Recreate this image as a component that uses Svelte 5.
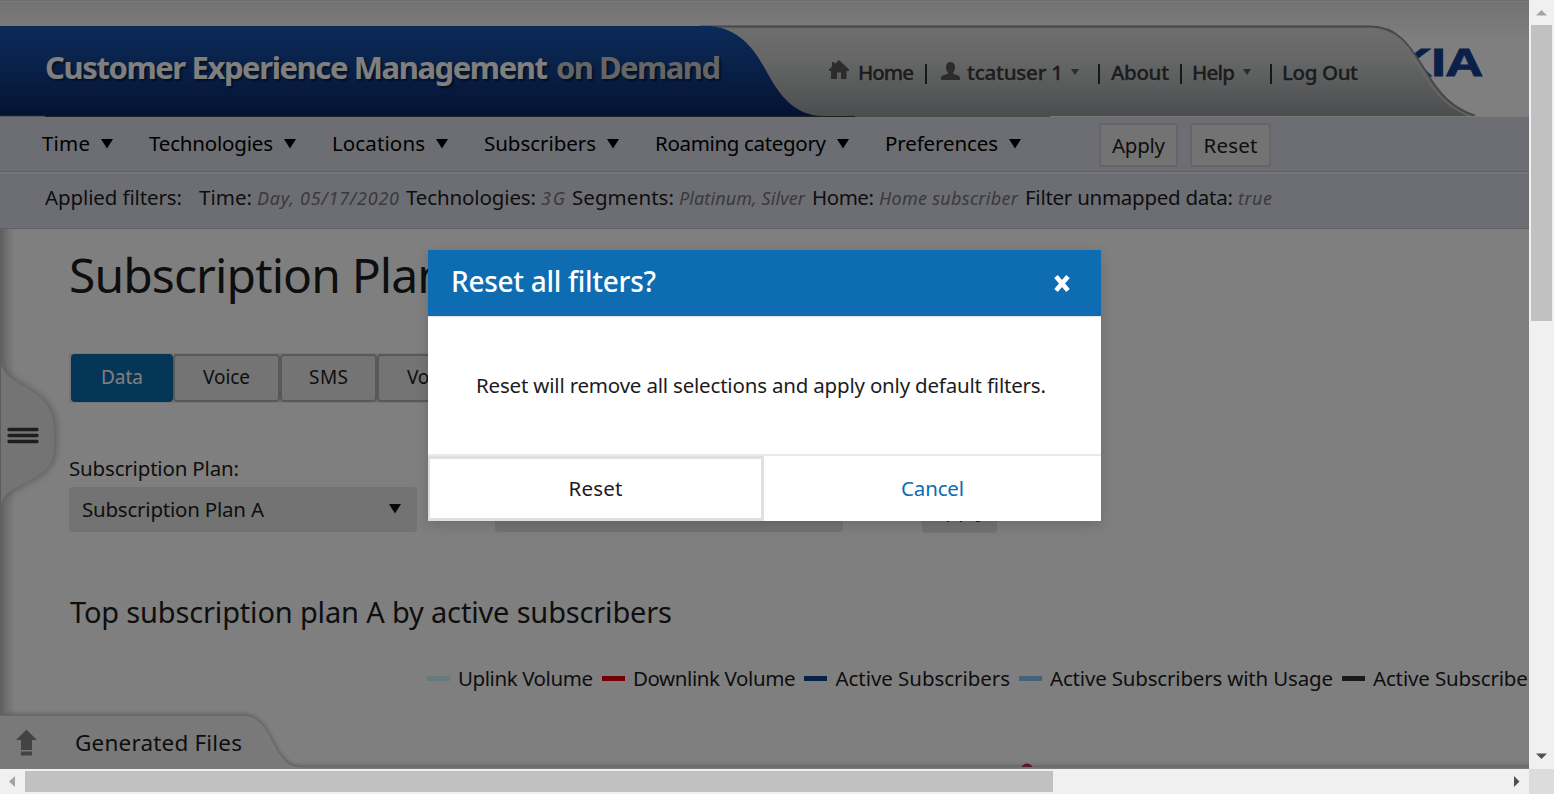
<script>
  const menu = [
    { label: 'Time', w: 48 },
    { label: 'Technologies', w: 124 },
    { label: 'Locations', w: 93 },
    { label: 'Subscribers', w: 112 },
    { label: 'Roaming category', w: 171 },
    { label: 'Preferences', w: 113 }
  ];
  const filters = [
    { name: 'Time:', w: 53, value: 'Day, 05/17/2020', vw: 142 },
    { name: 'Technologies:', w: 130, value: '3G', vw: 24 },
    { name: 'Segments:', w: 102, value: 'Platinum, Silver', vw: 126 },
    { name: 'Home:', w: 62, value: 'Home subscriber', vw: 139 },
    { name: 'Filter unmapped data:', w: 208, value: 'true', vw: 34 }
  ];
  const tabs = [
    { label: 'Data', w: 42, box: 102, active: true },
    { label: 'Voice', w: 47, box: 107 },
    { label: 'SMS', w: 39, box: 97 },
    { label: 'VoLTE', w: 52, box: 112 }
  ];
  const legend = [
    { label: 'Uplink Volume', w: 135, color: '#cdf2fb' },
    { label: 'Downlink Volume', w: 162.5, color: '#e60009' },
    { label: 'Active Subscribers', w: 174.5, color: '#124191' },
    { label: 'Active Subscribers with Usage', w: 283, color: '#87c6f3' },
    { label: 'Active Subscribers without Usage', w: 316, color: '#333333' }
  ];

  // Tracks a label out or in so that it takes exactly the given advance width.
  function fit(node, width) {
    const range = document.createRange();
    range.selectNodeContents(node);
    const natural = range.getBoundingClientRect().width;
    const step = (width - natural) / (node.textContent.length - 1);
    node.style.letterSpacing = `${step}px`;
    node.style.marginRight = `${-step}px`;
  }
</script>

<div class="window">
  <div class="page">
    <header>
      <svg class="banner" width="1529" height="117" viewBox="0 0 1529 117">
        <defs>
          <linearGradient id="top" x1="0" y1="0" x2="0" y2="1">
            <stop offset="0" stop-color="#e6e6ea" /><stop offset=".22" stop-color="#f4f4f4" /><stop offset=".35" stop-color="#fff" />
          </linearGradient>
          <linearGradient id="grey" x1="0" y1="0" x2="0" y2="1">
            <stop offset="0" stop-color="#dcdddc" /><stop offset=".35" stop-color="#cccecd" /><stop offset="1" stop-color="#989a9e" />
          </linearGradient>
          <linearGradient id="blue" x1="0" y1="0" x2="0" y2="1">
            <stop offset="0" stop-color="#1656b2" /><stop offset=".4" stop-color="#134596" /><stop offset="1" stop-color="#0a2562" />
          </linearGradient>
        </defs>
        <rect width="1529" height="117" fill="url(#top)" />
        <rect width="1529" height="1" fill="#d8d8dc" /><rect y="1" width="1529" height="1" fill="#f6f6f6" />
        <text class="logo" transform="scale(1.33 1)" x="1048 1076.1 1086.6" y="76.500">KIA</text>
        <path d="M700 26.500H1370C1400 26.500 1412 50 1427 73C1439 94 1453 108 1475 115.500V117H700Z" fill="url(#grey)" />
        <path d="M700 28.500H1370C1398 28.500 1409 51 1424 74C1436 95 1450 109 1471 116.500" fill="none" stroke="#d4d6d5" stroke-width="1.200" />
        <path d="M700 26.500H1370C1401 26.500 1412 50 1427 73C1439 94 1453 108 1475 115.500" fill="none" stroke="#8c8e8d" stroke-width="1.800" />
        <path d="M0 26H710C742 29 756 52 768 74C781 98 796 115 822 116H0Z" fill="url(#blue)" />
        <path d="M0 116h45" stroke="#505a78" /><path d="M45 116.500H855" stroke="#404044" /><path d="M1050 116.500H1529" stroke="#f4f4f4" />
      </svg>
      <div class="brand"><b use:fit={503}>Customer Experience Management</b><b class="dim" use:fit={165}>on Demand</b></div>
      <nav class="account">
        <svg class="home" width="20" height="19" viewBox="0 0 20 19"><path d="M10 0L20 9.500V11H17.500V19H12V12.500H8V19H2V11H0V9.500L3 6.500V2h2.500v2.300Z" /></svg>
        <span class="a-home" use:fit={56}>Home</span><i></i>
        <svg class="user" width="19" height="18" viewBox="0 0 19 18"><path d="M9.500 0C12.500 0 14 2 14 5C14 8 13 9.500 12 11C13 13 19 12.500 19 16V18H0V16C0 12.500 6 13 7 11C6 9.500 5 8 5 5C5 2 6.500 0 9.500 0Z" /></svg>
        <span class="a-user" use:fit={96}>tcatuser 1</span><em></em><i class="after-caret"></i>
        <span class="a-text wide" use:fit={58}>About</span><i></i>
        <span class="a-text" use:fit={43}>Help</span><em></em><i class="after-caret"></i>
        <span class="a-text" use:fit={76}>Log Out</span>
      </nav>
    </header>

    <div class="menubar">
      {#each menu as m}
        <span class="item"><span use:fit={m.w}>{m.label}</span><svg width="12" height="10" viewBox="0 0 12 10"><path d="M0 0H12L6 9.500Z" /></svg></span>
      {/each}
      <button class="apply"><span use:fit={53}>Apply</span></button>
      <button class="reset"><span use:fit={54}>Reset</span></button>
    </div>

    <div class="applied">
      <span class="lead" use:fit={137}>Applied filters:</span>
      {#each filters as f}
        <span class="pair"><span use:fit={f.w}>{f.name}</span><em use:fit={f.vw}>{f.value}</em></span>
      {/each}
    </div>

    <main>
      <h1><span use:fit={378}>Subscription Plan</span></h1>
      <div class="tabs">
        {#each tabs as t}
          <div class="tab" class:active={t.active} style:width="{t.box}px"><span use:fit={t.w}>{t.label}</span></div>
        {/each}
      </div>
      <div class="label"><span use:fit={170}>Subscription Plan:</span></div>
      <div class="fields">
        <div class="select"><span use:fit={182}>Subscription Plan A</span><svg width="12" height="10" viewBox="0 0 12 10"><path d="M0 0H12L6 9.500Z" /></svg></div>
        <div class="select second"></div>
        <div class="go">Apply</div>
      </div>
      <h2><span use:fit={602}>Top subscription plan A by active subscribers</span></h2>
      <div class="legend">
        {#each legend as l}
          <span class="entry"><span class="swatch" style:background={l.color}></span><span use:fit={l.w}>{l.label}</span></span>
        {/each}
      </div>
      <div class="edge"></div>
      <svg class="handle" width="66" height="160" viewBox="0 0 66 160">
        <path d="M1 9C7 34 53 31 54 72V94C53 128 7 126 1 149Z" />
        <g stroke="#3c3c3c" stroke-width="3.400" stroke-linecap="round"><path d="M9 74.500H37M9 80.500H37M9 86.500H37" /></g>
      </svg>
    </main>

    <footer>
      <svg class="tray" width="1529" height="63" viewBox="0 0 1529 63">
        <circle cx="1027" cy="64" r="6" fill="#b02050" />
        <path class="shape" d="M-5 9.500H244C274 9.500 272 61 300 61H1535V72H-5Z" />
        <path d="M-5 11.500H243C271 12 272 59 297 62" fill="none" stroke="#fff" stroke-opacity=".35" />
        <g fill="#868686"><path d="M26.500 23.500L37 34H32V44H21V34H16Z" /><path d="M21 45.500h11v4h-11z" /></g>
        <path d="M1021.500 61A6 6 0 0 1 1032.500 61Z" fill="#c03060" />
      </svg>
      <span class="files" use:fit={167}>Generated Files</span>
    </footer>
    <div class="veil"></div>

    <div class="dialog" role="dialog">
      <div class="bar">
        <span use:fit={205}>Reset all filters?</span>
        <svg width="16" height="17" viewBox="0 0 16 17"><path d="M2 1.500L14 15.500M14 1.500L2 15.500" stroke="#fff" stroke-width="4.600" /></svg>
      </div>
      <div class="message"><span use:fit={570}>Reset will remove all selections and apply only default filters.</span></div>
      <div class="actions">
        <div class="yes"><span use:fit={54}>Reset</span></div>
        <div class="no"><span use:fit={63}>Cancel</span></div>
      </div>
    </div>
  </div>

  <div class="vbar">
    <svg width="25" height="25"><path d="M7 15.500L12.500 10L18 15.500Z" fill="#a3a3a3" /></svg>
    <div class="thumb"></div>
    <svg width="25" height="25"><path d="M7 9.500L12.500 15L18 9.500Z" fill="#505050" /></svg>
  </div>
  <div class="hbar">
    <svg width="25" height="25"><path d="M15 7L9 12.500L15 18Z" fill="#a3a3a3" /></svg>
    <div class="thumb"></div>
    <svg width="25" height="25"><path d="M10 7L15.500 12.500L10 18Z" fill="#505050" /></svg>
  </div>
  <div class="corner"></div>
</div>

<style>
  :global(body) { margin: 0; overflow: hidden; }
  .window { width: 1554px; height: 794px; display: grid; grid-template: 769px 25px / 1529px 25px; font: 20.5px 'Noto Sans', sans-serif; color: #1c1c1e; white-space: nowrap; }
  .page { position: relative; overflow: hidden; background: #fff; height: 769px; }
  header { position: relative; height: 117px; display: flex; }
  .banner { position: absolute; left: 0; top: 0; }
  .logo { font: bold 39.5px 'Liberation Sans', sans-serif; fill: #124191; stroke: #124191; stroke-width: 1; }
  .brand { position: relative; width: 827px; padding-left: 45px; box-sizing: border-box; display: flex; gap: 8px; font-size: 31px; line-height: 135px; color: #fff; text-shadow: 2px 2px 2px rgba(0, 0, 0, .5); }
  .brand .dim { color: #c8cacc; }
  .account { position: relative; display: flex; align-items: center; height: 41px; padding: 51px 0 0 1px; font-weight: 500; -webkit-text-stroke: .35px #38383a; color: #38383a; text-shadow: 0 1px 2px #ccc; fill: #59595b; }
  .account i { width: 2px; height: 20px; margin-left: 11px; background: #303032; margin-top: 4px; }
  .account em { border: 4px solid transparent; border-top: 6px solid #59595b; border-bottom: 0; margin-left: 8px; }
  .account .home { margin: -4px 0 0 1px; }
  .a-home { margin-left: 9px; }
  .user { margin: -2px 0 0 14px; }
  .a-user { margin-left: 7px; }
  .account .after-caret { margin-left: 19px; }
  .a-text { margin-left: 10px; }
  .wide { margin-left: 11px; }
  .menubar { height: 55px; box-sizing: border-box; background: #dadce6; display: flex; padding: 6px 0 0 42px; color: #000; border-bottom: 1px solid #bebec6; }
  .item { display: flex; height: 41px; line-height: 41px; gap: 11px; margin-right: 36px; }
  .item svg { margin-top: 16px; }
  .menubar button { box-sizing: border-box; height: 44px; border: 2px solid #cacbd5; border-radius: 3px; background: #e7e7e7; font: inherit; color: #1c1c1e; padding: 0; line-height: 41px; text-align: center; }
  .apply { width: 79px; margin-left: 42px; }
  .reset { width: 81px; margin-left: 12px; }
  .applied { height: 57px; box-sizing: border-box; background: #dadce6; border-top: 2px solid #ededf0; border-bottom: 1px solid #bebec8; display: flex; padding-left: 45px; line-height: 47px; }
  .pair { display: flex; gap: 5px; margin-left: 7px; }
  .lead + .pair { margin-left: 17px; }
  .pair em { font-size: 18px; color: #747478; padding-top: 1px; }
  main { position: relative; height: 487px; padding-left: 69px; }
  h1 { font-size: 48px; font-weight: 400; line-height: 92px; height: 124px; margin: 0; }
  .tabs { display: flex; height: 48px; border: 1px solid #ececec; width: max-content; background: #e9e9e9; padding-left: 1px; }
  .tab { box-sizing: border-box; border: 2px solid #b2b2b2; border-radius: 4px; font-size: 19px; line-height: 43px; text-align: center; background: #e8e8e8; }
  .tab.active { background: #0b6cb0; border-color: #0b6cb0; color: #fff; }
  .label { margin-top: 51px; height: 33px; line-height: 29px; }
  .fields { display: flex; }
  .select { width: 348px; height: 45px; box-sizing: border-box; background: #e7e7e7; border-radius: 3px; display: flex; justify-content: space-between; padding: 0 16px 0 13px; line-height: 45px; }
  .select svg { margin-top: 17px; fill: #111; }
  .second { margin-left: 78px; }
  .go { width: 75px; height: 46px; margin-left: 79px; background: #e7e7e7; border-radius: 3px; text-align: center; line-height: 45px; }
  h2 { font-size: 29px; font-weight: 400; margin: 52px 0 0; line-height: 54px; height: 71px; padding-left: 1px; }
  .legend { display: flex; gap: 9px; margin-left: 358px; line-height: 45px; }
  .entry { display: flex; align-items: center; gap: 8px; }
  .swatch { width: 23px; height: 5px; }
  .edge { position: absolute; left: 0; top: 0; width: 15px; height: 487px; background: linear-gradient(90deg, #bcbcbc, #e4e4e4 50%, #fff); }
  .handle { position: absolute; left: 0; top: 126px; }
  .handle > path { fill: #e9e9eb; filter: drop-shadow(1px 0 4px #aaa); }
  footer { position: absolute; left: 0; top: 706px; width: 1529px; height: 63px; overflow: hidden; }
  .tray { position: absolute; left: 0; top: 0; height: 63px; }
  .shape { fill: #f3f3f3; stroke: #d2d2d2; filter: drop-shadow(0 -1px 2px #bbb); }
  .files { position: relative; display: inline-block; margin-left: 75px; font-size: 22.5px; line-height: 74px; }
  .veil { position: absolute; inset: 0; background: rgba(0, 0, 0, .5); }
  .dialog { position: absolute; left: 428px; top: 250px; width: 673px; height: 271px; background: #fff; box-shadow: 0 4px 12px rgba(0, 0, 0, .15); }
  .bar { height: 66px; background: #0d6cb2; color: #fff; display: flex; justify-content: space-between; font-size: 28px; font-weight: 500; line-height: 63px; padding: 0 31px 0 23px; }
  .bar svg { margin-top: 25px; }
  .message { height: 138px; box-sizing: border-box; border-top: 1px solid #e4e4e8; padding-left: 48px; line-height: 136px; }
  .actions { height: 67px; box-sizing: border-box; border-top: 2px solid #eaeaea; display: flex; }
  .yes { width: 336px; box-sizing: border-box; border: 3px solid #e0e0e0; border-left-width: 2px; text-align: center; line-height: 59px; }
  .no { flex: 1; text-align: center; line-height: 65px; color: #0d6cb2; }
  .vbar, .hbar { background: #f0f0f0; display: flex; }
  .vbar { flex-direction: column; }
  .vbar .thumb { width: 21px; height: 296px; margin: 0 2px auto; background: #c1c1c1; }
  .hbar .thumb { width: 1028px; height: 21px; margin: 2px auto 2px 0; background: #c1c1c1; }
  .corner { background: #dcdcdc; }
</style>
